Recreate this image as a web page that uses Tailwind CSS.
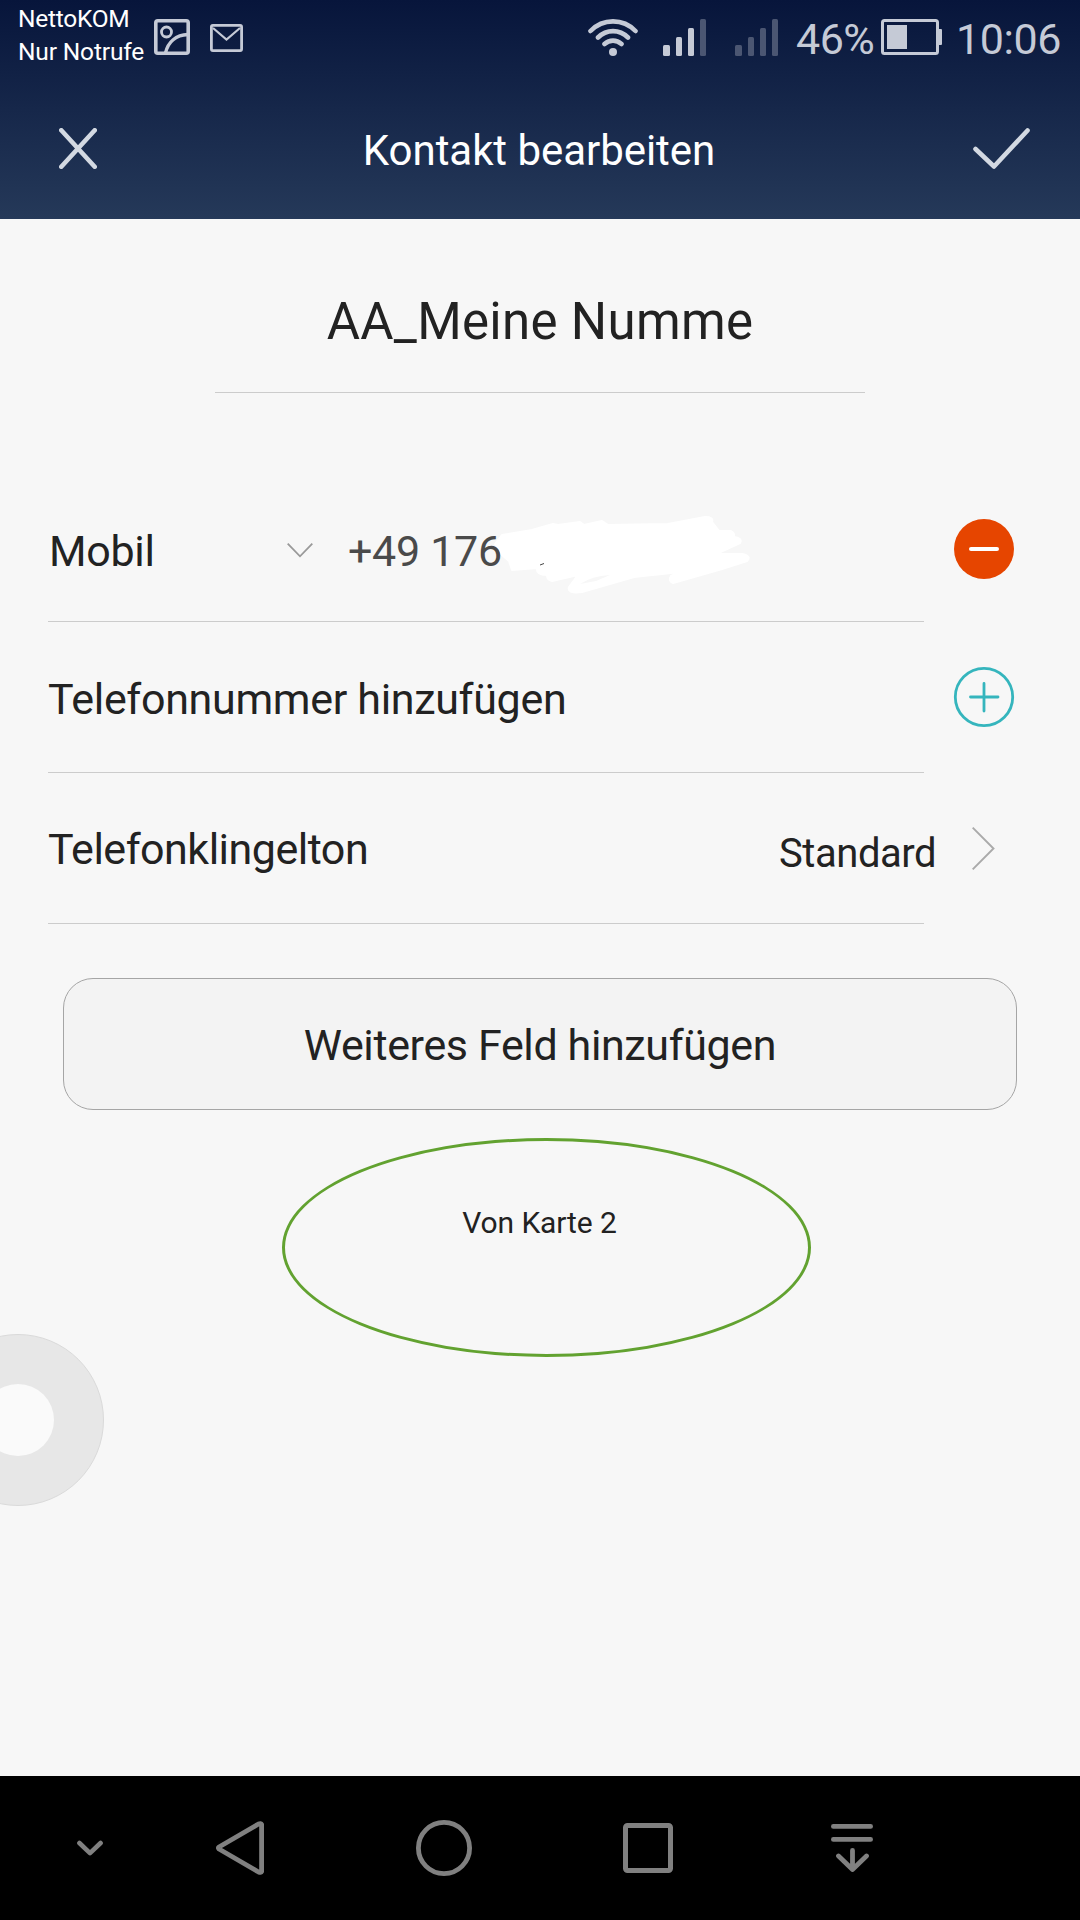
<!DOCTYPE html>
<html lang="de">
<head>
<meta charset="utf-8">
<title>Kontakt bearbeiten</title>
<script src="https://cdn.jsdelivr.net/npm/@tailwindcss/browser@4"></script>
</head>
<body class="w-[1080px] h-[1920px] overflow-hidden bg-[#f7f7f7] font-['Roboto',sans-serif] text-[#222]">
<div class="relative flex h-[1920px] w-[1080px] flex-col overflow-hidden">
  <header class="flex h-[219px] shrink-0 flex-col bg-[linear-gradient(to_bottom,#07153b,#253959)]">
    <!-- Status bar -->
    <div class="flex h-[75px] items-start text-[#c5cad6]">
      <div class="w-[154px] shrink-0 whitespace-nowrap pl-[18px] pt-[2px] text-[24.5px] leading-[33px] text-white"><div class="tracking-[-0.25px]">NettoKOM</div><div class="tracking-[-0.15px]">Nur Notrufe</div></div>
      <svg class="mt-[19px] h-9 w-9 shrink-0" viewBox="0 0 36 36" fill="none" stroke="currentColor" stroke-width="3.6"><rect x="1.8" y="1.8" width="32.4" height="32.4" rx="2"/><circle cx="12.5" cy="13" r="5" stroke-width="2.8"/><path d="M11.5 34C14 23 22 16 34 15.5" stroke-width="3.4"/></svg>
      <svg class="ml-5 mt-6 h-7 w-[33px] shrink-0" viewBox="0 0 33 28" fill="none" stroke="currentColor" stroke-width="2.8"><rect x="1.4" y="1.4" width="30.2" height="25.2" rx="1.5"/><path d="M3 4L16.5 15.5L30 4" stroke-width="2.2"/></svg>
      <svg class="ml-[345px] mt-[19px] h-[37px] w-[50px] shrink-0" viewBox="0 0 50 37" fill="none" stroke="currentColor" stroke-width="4.6" stroke-linecap="round"><path d="M2.5 12C15 -.8 35 -.8 47.500 12M10 18.500C18.500 10 31.500 10 40 18.500M16.500 25C21.500 20.500 28.500 20.500 33.500 25"/><circle cx="25" cy="33" r="4" fill="currentColor" stroke="none"/></svg>
      <svg class="ml-[25px] mt-[19px] h-[37px] w-[43px] shrink-0" viewBox="0 0 43 37" fill="currentColor"><rect y="26" width="7" height="11" rx="1.500"/><rect x="13" y="18" width="6" height="19" rx="1.500"/><rect x="25" y="9" width="6" height="28" rx="1.500"/><rect x="37" width="6" height="37" rx="1.500" fill="#4b5672"/></svg>
      <svg class="ml-[29px] mt-[19px] h-[37px] w-[43px] shrink-0" viewBox="0 0 43 37" fill="#4b5672"><rect y="26" width="7" height="11" rx="1.500"/><rect x="13" y="18" width="6" height="19" rx="1.500"/><rect x="25" y="9" width="6" height="28" rx="1.500"/><rect x="37" width="6" height="37" rx="1.500"/></svg>
      <div class="ml-[18px] mt-[14px] w-[85px] shrink-0 text-[43px] leading-[50px] tracking-[-0.5px]">46%</div>
      <svg class="mt-[19px] h-9 w-[61px] shrink-0" viewBox="0 0 61 36"><rect x="1.500" y="1.500" width="55" height="33" rx="2" fill="none" stroke="currentColor" stroke-width="3"/><rect x="6" y="6" width="20" height="24" fill="currentColor"/><rect x="57" y="10" width="4" height="16" rx="1" fill="currentColor"/></svg>
      <div class="ml-[14px] mt-[14px] shrink-0 whitespace-nowrap text-[43px] leading-[50px] tracking-[-0.4px]">10:06</div>
    </div>
    <!-- Action bar -->
    <div class="flex h-[144px] items-start px-[50px]">
      <svg class="ml-[9px] mt-[53px] h-[41px] w-[38px] shrink-0" viewBox="0 0 38 41" fill="none" stroke="#d3d9e2" stroke-width="4.600" stroke-linecap="round"><path d="M2.300 2.300L35.700 38.700M35.700 2.300L2.300 38.700"/></svg>
      <h1 class="mt-[51px] w-[877px] whitespace-nowrap pl-[8px] text-center text-[42px] leading-[50px] tracking-[-0.05px] text-white">Kontakt bearbeiten</h1>
      <svg class="mt-[53px] h-[41px] w-[57px] shrink-0" viewBox="0 0 57 41" fill="none" stroke="#d3d9e2" stroke-width="4.600" stroke-linecap="round" stroke-linejoin="round"><path d="M2.500 21L21 38.500L54.500 2.500"/></svg>
    </div>
  </header>

  <main class="flex h-[1557px] shrink-0 flex-col">
    <div class="mx-auto mt-[71px] flex h-[103px] w-[650px] shrink-0 items-start justify-center border-b border-[#ccc] pt-[2px] text-[51px] leading-[60px] tracking-[0.3px]">AA_Meine Numme</div>

    <div class="mt-[87px] flex h-[141px] shrink-0 items-center pl-[49px] text-[43px]">
      <span class="w-[238px] whitespace-nowrap pt-[2px] tracking-[-0.3px]">Mobil</span>
      <svg class="h-[15px] w-[26px] shrink-0" viewBox="0 0 26 15" fill="none" stroke="#999" stroke-width="1.800"><path d="M.7.7L13 13.300L25.300.7"/></svg>
      <div class="relative ml-[35px] w-[605px] whitespace-nowrap pt-[2px] tracking-[-0.3px] text-[#4a4a4a]">+49 176
        <svg class="absolute left-[146px] top-[-6px] h-[84px] w-[260px]" viewBox="494 510 260 84"><path fill="#fff" stroke="#fff" stroke-width="2" stroke-linejoin="round" d="M495 543L502 534L532 529L553 523L558 524L580 521L584 524L602 520L608 524L668 523L705 516Q714 516 712 521L716 526L719 530L731 530Q736 533 733 536Q743 537 740 542L716 553L742 553Q752 555 747 560L722 568L673 582Q668 580 671 575L680 571L634 576L582 591Q567 593 569 586L578 574L552 580Q547 579 547 574Q536 574 537 567L512 569L509 560L502 554L500 548Z"/><path d="M580 583Q592 575 610 574L596 580Z" fill="#f7f7f7"/><path d="M540 564L544 562.500" stroke="#444" stroke-width="1"/></svg>
      </div>
      <svg class="-mt-[3px] h-[62px] w-[62px] shrink-0" viewBox="0 0 62 62"><circle cx="31" cy="31" r="30" fill="#e64500"/><path d="M18 31H44" stroke="#fff" stroke-width="4" stroke-linecap="round"/></svg>
    </div>
    <div class="ml-[48px] h-px w-[876px] shrink-0 bg-[#ccc]"></div>

    <div class="flex h-[150px] shrink-0 items-center pl-[48px] text-[43px]">
      <span class="w-[905px] whitespace-nowrap pt-[4px] tracking-[-0.32px]">Telefonnummer hinzufügen</span>
      <svg class="h-[62px] w-[62px] shrink-0" viewBox="0 0 62 62" fill="none" stroke="#35b5bd" stroke-width="2.800" stroke-linecap="round"><circle cx="31" cy="31" r="28.700"/><path d="M17.500 31H45M31 17.500V45"/></svg>
    </div>
    <div class="ml-[48px] h-px w-[876px] shrink-0 bg-[#ccc]"></div>

    <div class="flex h-[150px] shrink-0 items-center pl-[48px] text-[43px]">
      <span class="w-[731px] whitespace-nowrap pt-[3px] tracking-[-0.5px]">Telefonklingelton</span>
      <span class="w-[193px] whitespace-nowrap pt-[11px] text-[40px] tracking-[-0.45px]">Standard</span>
      <svg class="h-[43px] w-[23px] shrink-0" viewBox="0 0 23 43" fill="none" stroke="#aaa" stroke-width="1.900"><path d="M.7.7L21.500 21.500L.7 42.300"/></svg>
    </div>
    <div class="ml-[48px] h-px w-[876px] shrink-0 bg-[#ccc]"></div>

    <button class="mx-auto mt-[54px] flex h-[132px] w-[954px] shrink-0 items-center justify-center rounded-[30px] border border-[#a5a5a5] bg-[#f3f3f3] pt-[3px] text-[43px] tracking-[-0.37px]">Weiteres Feld hinzufügen</button>

    <div class="ml-[282px] mt-7 flex h-[219px] w-[529px] shrink-0 items-start justify-center rounded-[50%] border-[3px] border-[#62a230] pr-[14px] pt-[62px] text-[30px] leading-[40px] tracking-[-0.1px]">Von Karte 2</div>
  </main>

  <!-- Floating assist button -->
  <div class="absolute left-[-68px] top-[1334px] flex h-[172px] w-[172px] items-center justify-center rounded-full border border-[#dadada] bg-[#e7e7e7]"><div class="h-[72px] w-[72px] rounded-full bg-[#fafafa]"></div></div>

  <nav class="flex h-[144px] shrink-0 items-center bg-black pl-[77px] text-[#808080]">
    <svg class="h-4 w-[26px] shrink-0" viewBox="0 0 26 16" fill="none" stroke="currentColor" stroke-width="4.600" stroke-linecap="round" stroke-linejoin="round"><path d="M2.400 3L13 13.200L23.600 3"/></svg>
    <svg class="ml-[113px] h-[54px] w-12 shrink-0" viewBox="0 0 48 54" fill="none" stroke="currentColor" stroke-width="4.800" stroke-linejoin="round"><path d="M45.600 3.500Q45 2 42.500 3L3 26Q2 27 3 28L42.500 51Q45 52 45.600 50.500Z"/></svg>
    <svg class="ml-[152px] h-14 w-14 shrink-0" viewBox="0 0 56 56" fill="none" stroke="currentColor" stroke-width="4.800"><circle cx="28" cy="28" r="25.600"/></svg>
    <svg class="ml-[151px] h-[50px] w-[50px] shrink-0" viewBox="0 0 50 50" fill="none" stroke="currentColor" stroke-width="5"><rect x="2.500" y="2.500" width="45" height="45" rx="2"/></svg>
    <svg class="ml-[158px] h-12 w-[42px] shrink-0" viewBox="0 0 42 48" fill="none" stroke="currentColor" stroke-width="4.800" stroke-linecap="round" stroke-linejoin="round"><path d="M2.400 2.400H39.600M2.400 15.400H39.600M21.500 26.500V45M7.500 32L21.500 45.500L35.500 32"/></svg>
  </nav>
</div>
</body>
</html>
